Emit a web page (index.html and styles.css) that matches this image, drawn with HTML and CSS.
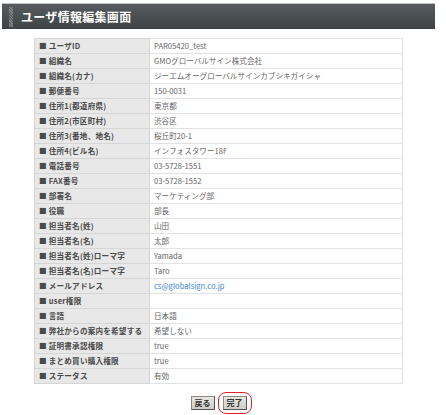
FILE: index.html
```html
<!DOCTYPE html>
<html lang="ja">
<head>
<meta charset="utf-8">
<link rel="stylesheet" href="styles.css">
</head>
<body>
<div class="page">
  <div class="header">
    <span class="accent"></span>
    <h1 class="title">ユーザ情報編集画面</h1>
  </div>
  <table class="info">
    <colgroup><col class="c1"><col class="c2"></colgroup>
    <tr><th>■ ユーザID</th><td>PAR05420_test</td></tr>
    <tr><th>■ 組織名</th><td>GMOグローバルサイン株式会社</td></tr>
    <tr><th>■ 組織名(カナ)</th><td>ジーエムオーグローバルサインカブシキガイシャ</td></tr>
    <tr><th>■ 郵便番号</th><td>150-0031</td></tr>
    <tr><th>■ 住所1(都道府県)</th><td>東京都</td></tr>
    <tr><th>■ 住所2(市区町村)</th><td>渋谷区</td></tr>
    <tr><th>■ 住所3(番地、地名)</th><td>桜丘町20-1</td></tr>
    <tr><th>■ 住所4(ビル名)</th><td>インフォスタワー18F</td></tr>
    <tr><th>■ 電話番号</th><td>03-5728-1551</td></tr>
    <tr><th>■ FAX番号</th><td>03-5728-1552</td></tr>
    <tr><th>■ 部署名</th><td>マーケティング部</td></tr>
    <tr><th>■ 役職</th><td>部長</td></tr>
    <tr><th>■ 担当者名(姓)</th><td>山田</td></tr>
    <tr><th>■ 担当者名(名)</th><td>太郎</td></tr>
    <tr><th>■ 担当者名(姓)ローマ字</th><td>Yamada</td></tr>
    <tr><th>■ 担当者名(名)ローマ字</th><td>Taro</td></tr>
    <tr><th>■ メールアドレス</th><td class="mail">cs@globalsign.co.jp</td></tr>
    <tr><th>■ user権限</th><td></td></tr>
    <tr><th>■ 言語</th><td>日本語</td></tr>
    <tr><th>■ 弊社からの案内を希望する</th><td>希望しない</td></tr>
    <tr><th>■ 証明書承認権限</th><td>true</td></tr>
    <tr><th>■ まとめ買い購入権限</th><td>true</td></tr>
    <tr><th>■ ステータス</th><td>有効</td></tr>
  </table>
  <div class="actions">
    <button class="btn">戻る</button>
    <span class="ring"><button class="btn">完了</button></span>
  </div>
</div>
</body>
</html>
```
FILE: styles.css
```css
html, body {
  margin: 0;
  padding: 0;
  background: #fff;
}
body {
  font-family: "Noto Sans CJK JP", "DejaVu Sans", sans-serif;
}
.page {
  width: 446px;
  padding-top: 3px;
}
.header {
  margin-left: 2px;
  width: 433px;
  height: 26px;
  box-sizing: border-box;
  border-top: 1px solid #bfc3c4;
  background: linear-gradient(#565c5f, #3d4245);
  display: flex;
  align-items: center;
  gap: 8px;
  padding-left: 7px;
}
.accent {
  width: 4px;
  height: 20px;
  background: repeating-linear-gradient(45deg, #7c8386 0 1px, #5c6366 1px 2px);
}
.title {
  margin: 0;
  color: #fff;
  font-size: 12px;
  font-weight: bold;
  line-height: 20px;
  letter-spacing: 0.3px;
}
.info {
  margin: 9px 0 0 34px;
  width: 368px;
  table-layout: fixed;
  border-collapse: collapse;
  font-size: 7.6px;
  line-height: 14px;
}
.c1 { width: 115px; }
.c2 { width: 253px; }
.info th, .info td {
  height: 14px;
  padding: 0 4px;
  border: 1px solid #e2e2e2;
  text-align: left;
  white-space: nowrap;
  overflow: hidden;
}
.info th {
  background: #e8e8e8;
  color: #4a4a4a;
  font-weight: bold;
  padding-left: 4px;
  border-color: #d6d6d6;
  letter-spacing: 0.2px;
}
.info td {
  color: #666;
  background: #fff;
}
.info td.mail {
  color: #3a86d6;
}
.actions {
  display: flex;
  justify-content: center;
  align-items: center;
  gap: 3px;
  margin-top: 8px;
  padding-right: 4px;
}
.btn {
  font-family: "Noto Sans CJK JP", "DejaVu Sans", sans-serif;
  font-size: 8px;
  font-weight: bold;
  color: #333;
  height: 14px;
  line-height: 12px;
  padding: 0 3px;
  background: linear-gradient(#e8e6e0, #cfcdc6);
  border: 1px solid #8a8a8a;
  border-right-color: #555;
  border-bottom-color: #555;
  border-radius: 0;
}
.ring {
  display: inline-flex;
  padding: 3px 4px;
  border: 1.5px solid #e0202a;
  border-radius: 8px;
}
```
